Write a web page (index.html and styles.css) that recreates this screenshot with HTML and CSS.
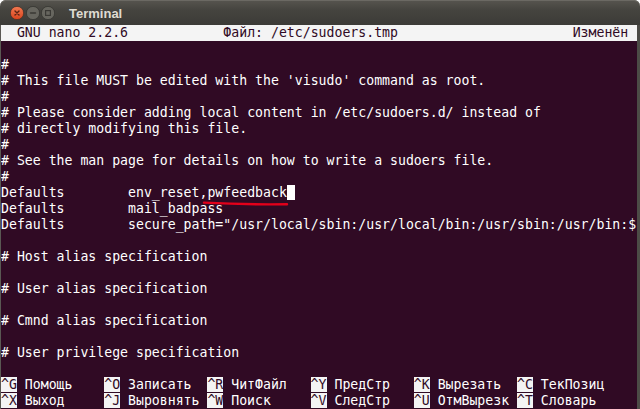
FILE: index.html
```html
<!DOCTYPE html>
<html lang="ru">
<head>
    <meta charset="UTF-8">
    <title>Terminal</title>
    <link rel="stylesheet" href="styles.css">
</head>
<body>
    <div class="window">
        <div class="titlebar">
            <div class="controls">
                <svg class="btn" width="14" height="14" viewBox="0 0 14 14">
                    <defs>
                        <linearGradient id="red" x1="0" y1="0" x2="0" y2="1">
                            <stop offset="0" stop-color="#f27a52"/>
                            <stop offset="1" stop-color="#d9441d"/>
                        </linearGradient>
                    </defs>
                    <circle cx="7" cy="7" r="6.6" fill="url(#red)" stroke="#3a2a22" stroke-width="0.6"/>
                    <path d="M5 5 L9 9 M9 5 L5 9" stroke="#5a2414" stroke-width="1.4" stroke-linecap="round"/>
                </svg>
                <svg class="btn" width="14" height="14" viewBox="0 0 14 14">
                    <circle cx="7" cy="7" r="6.6" fill="#67665f" stroke="#2e2d2a" stroke-width="0.6"/>
                    <path d="M4.5 7 H9.5" stroke="#3a3935" stroke-width="1.4" stroke-linecap="round"/>
                </svg>
                <svg class="btn" width="14" height="14" viewBox="0 0 14 14">
                    <circle cx="7" cy="7" r="6.6" fill="#67665f" stroke="#2e2d2a" stroke-width="0.6"/>
                    <rect x="4.6" y="4.6" width="4.8" height="4.8" fill="none" stroke="#3a3935" stroke-width="1.2"/>
                </svg>
            </div>
            <span class="title">Terminal</span>
        </div>
        <div class="term">
            <pre class="row head">  GNU nano 2.2.6            Файл: /etc/sudoers.tmp                      Изменён </pre>
            <pre class="screen">

#
# This file MUST be edited with the 'visudo' command as root.
#
# Please consider adding local content in /etc/sudoers.d/ instead of
# directly modifying this file.
#
# See the man page for details on how to write a sudoers file.
#
Defaults        env_reset,pwfeedback<span class="cursor"> </span>
Defaults        mail_badpass
Defaults        secure_path="/usr/local/sbin:/usr/local/bin:/usr/sbin:/usr/bin:$

# Host alias specification

# User alias specification

# Cmnd alias specification

# User privilege specification

</pre>
            <div class="shortcuts">
                <div class="item"><span class="key">^G</span> Помощь</div>
                <div class="item"><span class="key">^O</span> Записать</div>
                <div class="item"><span class="key">^R</span> ЧитФайл</div>
                <div class="item"><span class="key">^Y</span> ПредСтр</div>
                <div class="item"><span class="key">^K</span> Вырезать</div>
                <div class="item"><span class="key">^C</span> ТекПозиц</div>
                <div class="item"><span class="key">^X</span> Выход</div>
                <div class="item"><span class="key">^J</span> Выровнять</div>
                <div class="item"><span class="key">^W</span> Поиск</div>
                <div class="item"><span class="key">^V</span> СледСтр</div>
                <div class="item"><span class="key">^U</span> ОтмВырезк</div>
                <div class="item"><span class="key">^T</span> Словарь</div>
            </div>
        </div>
        <svg class="mark" width="640" height="409" viewBox="0 0 640 409">
            <path d="M204 202.6 Q246 204.8 287 204.2" fill="none" stroke="#e3001a" stroke-width="2.4" stroke-linecap="round"/>
        </svg>
    </div>
</body>
</html>
```

FILE: styles.css
```css
html, body {
    margin: 0;
    background-color: #ffffff;
}
.window {
    position: relative;
    width: 640px;
    height: 409px;
    display: flex;
    flex-direction: column;
    overflow: hidden;
}
.titlebar {
    height: 25px;
    flex: none;
    display: flex;
    align-items: center;
    gap: 14px;
    padding-left: 10px;
    box-sizing: border-box;
    background: linear-gradient(#57554f, #45443f 40%, #3c3b37);
    border-radius: 6px 6px 0 0;
    box-shadow: inset 0 1px 0 #6b6963;
}
.controls {
    display: flex;
    gap: 1.5px;
    padding-top: 1px;
}
.btn {
    display: block;
}
.title {
    font-family: "Liberation Sans", Arial, sans-serif;
    font-weight: bold;
    font-size: 13px;
    color: #dfdbd2;
    padding-top: 1px;
}
.term {
    flex: 1;
    background-color: #300a24;
    border-left: 1px solid #5a5853;
    border-right: 3px solid #4c4b46;
    font-family: "DejaVu Sans Mono", monospace;
    font-size: 13.2px;
    line-height: 16px;
    color: #ffffff;
    overflow: hidden;
}
.row, .screen {
    margin: 0;
    font: inherit;
    white-space: pre;
}
.head {
    background-color: #f4f4f4;
    color: #300a24;
    height: 16px;
}
.screen {
    height: 336px;
    overflow: hidden;
}
.cursor {
    background-color: #ffffff;
}
.shortcuts {
    display: grid;
    grid-template-columns: repeat(6, 13ch);
    white-space: pre;
}
.key {
    background-color: #f4f4f4;
    color: #300a24;
}
.mark {
    position: absolute;
    top: 0;
    left: 0;
    pointer-events: none;
}
```
